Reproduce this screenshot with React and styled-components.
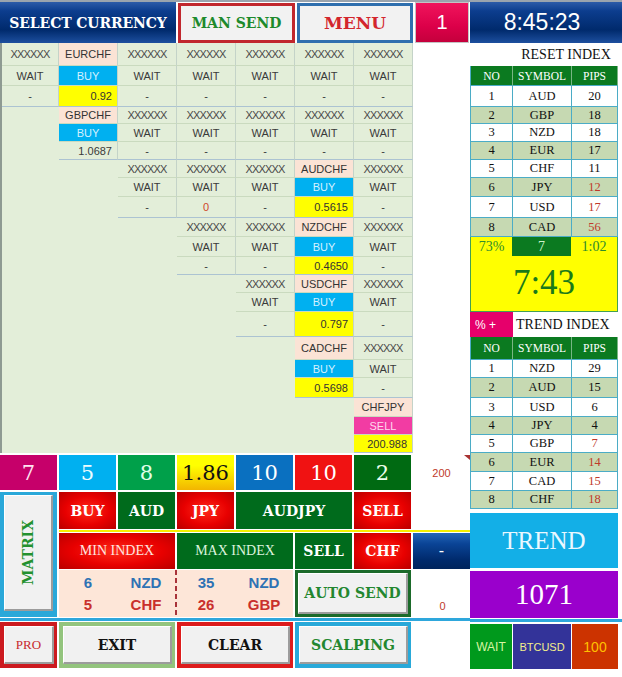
import React from "react";
import styled, { createGlobalStyle } from "styled-components";

const SANS = `"Liberation Sans", Arial, sans-serif`;
const SERIF = `"Liberation Serif", "Times New Roman", serif`;
const SLAB = `"DejaVu Serif", Georgia, serif`;

const NAVY = "linear-gradient(180deg, #2b5ba8 0%, #0c3d8e 22%, #002a6c 68%, #1d4f9f 100%)";
const RED = "radial-gradient(ellipse at center, #ff2a1a 0%, #e80000 55%, #b80000 100%)";
const GREEN = "#006b1c";

const GlobalStyle = createGlobalStyle`
	html, body { margin: 0; padding: 0; background: #fff; }
	* { box-sizing: border-box; }
`;

const ROWS = [23, 20, 21, 17, 18, 18, 18, 19, 21, 19, 20, 18, 18, 19, 25, 23, 18, 20, 19, 18, 18];

const PAIRS = {
	"0-1": { name: "EURCHF", signal: "BUY", value: "0.92", hl: true },
	"1-1": { name: "GBPCHF", signal: "BUY", value: "1.0687" },
	"2-3": { value: "0", zero: true },
	"2-5": { name: "AUDCHF", signal: "BUY", value: "0.5615", hl: true },
	"3-5": { name: "NZDCHF", signal: "BUY", value: "0.4650", hl: true },
	"4-5": { name: "USDCHF", signal: "BUY", value: "0.797", hl: true },
	"5-5": { name: "CADCHF", signal: "BUY", value: "0.5698", hl: true },
	"6-6": { name: "CHFJPY", signal: "SELL", value: "200.988", hl: true },
};

const matrixRows = [];
for (let b = 0; b < 7; b++) {
	for (let p = 0; p < 3; p++) {
		const cells = [];
		for (let c = 0; c < 7; c++) {
			if (c < b) {
				cells.push(null);
				continue;
			}
			cells.push({ name: "XXXXXX", signal: "WAIT", value: "-", ...PAIRS[`${b}-${c}`], part: p });
		}
		matrixRows.push(cells);
	}
}

const TILES = [
	{ v: "7", bg: "#c6006a", fg: "#ffe4f2" },
	{ v: "5", bg: "#00b0f0", fg: "#ecfcff" },
	{ v: "8", bg: "#00a04a", fg: "#e0ffe8" },
	{ v: "1.86", bg: "linear-gradient(180deg, #ffff00 30%, #f3b500 100%)", fg: "#111" },
	{ v: "10", bg: "#0a70c0", fg: "#ffffff" },
	{ v: "10", bg: "#f01212", fg: "#ffffff" },
	{ v: "2", bg: "#006a12", fg: "#ecffec" },
];

const RESET = [
	["1", "AUD", "20"], ["2", "GBP", "18"], ["3", "NZD", "18"], ["4", "EUR", "17"],
	["5", "CHF", "11"], ["6", "JPY", "12", true], ["7", "USD", "17", true], ["8", "CAD", "56", true],
];
const RESET_H = [21, 17, 18, 18, 18, 19, 21, 19];

const TRENDS = [
	["1", "NZD", "29"], ["2", "AUD", "15"], ["3", "USD", "6"], ["4", "JPY", "4"],
	["5", "GBP", "7", true], ["6", "EUR", "14", true], ["7", "CAD", "15", true], ["8", "CHF", "18", true],
];
const TREND_H = [18, 20, 19, 18, 18, 19, 19, 18];

const Page = styled.div`
	width: 622px;
	height: 677px;
	display: flex;
	border-top: 2px solid #9aa4ae;
	background: #fff;
	overflow: hidden;
`;

const LeftCol = styled.div`
	width: 470px;
	display: flex;
	flex-direction: column;
`;

const RightCol = styled.div`
	width: 152px;
	display: flex;
	flex-direction: column;
`;

const TopBar = styled.div`
	height: 41px;
	display: grid;
	grid-template-columns: 176px 117px 116px 54px;
	column-gap: 2px;
`;

const TitleBar = styled.div`
	background: ${NAVY};
	color: #fff;
	font-family: ${SLAB};
	font-weight: 700;
	font-size: 14px;
	letter-spacing: -0.1px;
	display: flex;
	align-items: center;
	justify-content: center;
`;

const HeadButton = styled.div`
	margin-top: 1px;
	border: 3px solid ${p => p.$frame};
	background: #f2f2f2;
	color: ${p => p.$fg};
	font-family: ${SLAB};
	font-weight: 700;
	font-size: ${p => p.$size || 14}px;
	display: flex;
	align-items: center;
	justify-content: center;
`;

const PageBadge = styled.div`
	border: 1px solid #c4c4c4;
	background: linear-gradient(180deg, #f0145c 0%, #dc0049 60%, #c4003c 100%);
	color: #fff;
	font-family: ${SANS};
	font-size: 20px;
	display: flex;
	align-items: center;
	justify-content: center;
`;

const Matrix = styled.div`
	display: grid;
	grid-template-columns: 57px repeat(6, 59px) 57px;
	grid-template-rows: ${ROWS.map(h => h + "px").join(" ")};
	background: #e3eed9;
	border-left: 2px solid #8e9a92;
`;

const KIND = {
	plain: { bg: "transparent", fg: "#3a3a3a" },
	pair: { bg: "#fbe3d5", fg: "#333" },
	buy: { bg: "#00b0f0", fg: "#d4f1ff" },
	sell: { bg: "#f23ca3", fg: "#ffd8ee" },
	hl: { bg: "#ffff00", fg: "#333" },
};

const Cell = styled.div`
	display: flex;
	align-items: center;
	justify-content: ${p => (p.$right ? "flex-end" : "center")};
	padding: 0 5px;
	font-family: ${SANS};
	font-size: 11px;
	letter-spacing: ${p => (p.$masked ? "-0.8px" : "0")};
	color: ${p => (p.$zero ? "#d0452a" : p.$masked ? "#4a4a4a" : KIND[p.$kind].fg)};
	background: ${p => KIND[p.$kind].bg};
	border-right: 1px solid #c4d3c8;
	border-bottom: 1px solid ${p => (p.$last ? "#acc3d2" : "#cadabf")};
`;

const Blank = styled.div``;

const WhiteCell = styled.div`
	background: #fff;
`;

const NumberRow = styled.div`
	margin-top: 2px;
	height: 35px;
	display: grid;
	grid-template-columns: repeat(8, 57px);
	column-gap: 2px;
`;

const Tile = styled.div`
	background: ${p => p.$bg};
	color: ${p => p.$fg};
	font-family: ${SLAB};
	font-size: 21px;
	display: flex;
	align-items: center;
	justify-content: center;
`;

const NoteCell = styled.div`
	position: relative;
	color: #c0392b;
	font-family: ${SANS};
	font-size: 11px;
	display: flex;
	align-items: flex-end;
	justify-content: center;
	padding-bottom: 11px;
	&::after {
		content: "";
		position: absolute;
		top: 0;
		right: 0;
		border-left: 6px solid transparent;
		border-top: 5px solid #a83232;
	}
`;

const Controls = styled.div`
	margin-top: 2px;
	display: grid;
	grid-template-columns: repeat(8, 57px);
	grid-template-rows: 37px 2px 36px 47px;
	column-gap: 2px;
	row-gap: 1px;
`;

const Framed = styled.div`
	grid-column: span ${p => p.$span || 1};
	grid-row: span ${p => p.$rows || 1};
	background: ${p => p.$frame};
	padding: ${p => p.$pad || "4px 3px 4px 4px"};
	display: flex;
`;

const Bevel = styled.div`
	flex: 1;
	display: flex;
	align-items: center;
	justify-content: center;
	background: #f1f1f1;
	border-top: 1px solid #fff;
	border-left: 1px solid #fff;
	border-right: 2px solid #9c9c9c;
	border-bottom: 2px solid #9c9c9c;
	color: ${p => p.$fg};
	font-family: ${p => (p.$plain ? SERIF : SLAB)};
	font-weight: ${p => (p.$plain ? 400 : 700)};
	font-size: ${p => p.$size || 14}px;
`;

const VerticalLabel = styled.span`
	writing-mode: vertical-rl;
	transform: rotate(180deg);
`;

const Btn = styled.div`
	grid-column: span ${p => p.$span || 1};
	background: ${p => (p.$tone === "red" ? RED : GREEN)};
	color: ${p => p.$fg || "#fff"};
	font-family: ${p => (p.$light ? SERIF : SLAB)};
	font-weight: ${p => (p.$light ? 400 : 700)};
	font-size: 14px;
	display: flex;
	align-items: center;
	justify-content: center;
`;

const Spacer = styled.div``;

const YellowRule = styled.div`
	grid-column: span 7;
	background: #f6f000;
`;

const DashBtn = styled.div`
	background: linear-gradient(180deg, #2466b8 0%, #0a4496 30%, #002a6c 75%, #00245c 100%);
	color: #fff;
	font-family: ${SANS};
	font-size: 16px;
	display: flex;
	align-items: center;
	justify-content: center;
`;

const IndexPanel = styled.div`
	grid-column: span 4;
	background: #fde6d8;
	display: flex;
`;

const IndexHalf = styled.div`
	flex: 1;
	display: grid;
	grid-template-columns: 1fr 1fr;
	grid-template-rows: 1fr 1fr;
	padding: 1px 0 2px;
`;

const DashDivider = styled.div`
	width: 2px;
	background: repeating-linear-gradient(180deg, #a8333a 0 5px, transparent 5px 8px);
`;

const IndexText = styled.div`
	display: flex;
	align-items: center;
	justify-content: center;
	font-family: ${SANS};
	font-weight: 700;
	font-size: 15px;
	color: ${p => (p.$red ? "#c9302c" : "#2e72b4")};
`;

const ZeroCell = styled.div`
	color: #c0392b;
	font-family: ${SANS};
	font-size: 11px;
	display: flex;
	align-items: flex-end;
	justify-content: center;
	padding: 0 0 5px 2px;
`;

const Rule = styled.div`
	margin-top: 1px;
	height: 3px;
	background: #2ea7dc;
`;

const BottomRow = styled.div`
	margin-top: 1px;
	height: 46px;
	display: grid;
	grid-template-columns: repeat(8, 57px);
	column-gap: 2px;
`;

const Clock = styled.div`
	height: 41px;
	background: ${NAVY};
	color: #fff;
	font-family: ${SANS};
	font-size: 23px;
	display: flex;
	align-items: center;
	justify-content: center;
	padding-right: 8px;
`;

const TableTitle = styled.div`
	height: ${p => p.$h}px;
	display: flex;
	align-items: center;
	justify-content: center;
	padding-left: 40px;
	font-family: ${SERIF};
	font-size: 14px;
	color: #111;
`;

const Table = styled.div`
	width: 148px;
	border-left: 1px solid #4bacc6;
`;

const TRow = styled.div`
	height: ${p => p.$h}px;
	display: grid;
	grid-template-columns: 42px 59px 46px;
	background: ${p => (p.$head ? "#0b7a20" : p.$alt ? "#c6d9b2" : "#fff")};
`;

const TCell = styled.div`
	display: flex;
	align-items: center;
	justify-content: center;
	font-family: ${SERIF};
	font-size: ${p => (p.$head ? 11.5 : 12.5)}px;
	color: ${p => (p.$head ? "#fff" : p.$red ? "#c0392b" : "#111")};
	border-right: 1px solid ${p => (p.$head ? "rgba(255,255,255,0.45)" : "#4bacc6")};
	border-bottom: 1px solid #4bacc6;
`;

const TimerBox = styled.div`
	width: 148px;
	height: 75px;
	background: #ffff00;
	border: 1px solid #44a050;
	border-top: none;
	display: flex;
	flex-direction: column;
`;

const TimerTop = styled.div`
	height: 19px;
	display: grid;
	grid-template-columns: 41px 59px 46px;
`;

const TimerCell = styled.div`
	display: flex;
	align-items: center;
	justify-content: center;
	font-family: ${SERIF};
	font-size: 14px;
	color: ${p => (p.$boxed ? "#cdf3cd" : "#2e8b2e")};
	background: ${p => (p.$boxed ? "#0b7a20" : "transparent")};
`;

const TimerBig = styled.div`
	flex: 1;
	display: flex;
	align-items: center;
	justify-content: center;
	font-family: ${SERIF};
	font-size: 35px;
	color: #1a7a1a;
	padding-bottom: 2px;
`;

const TrendHead = styled.div`
	height: 25px;
	display: grid;
	grid-template-columns: 43px 1fr;
`;

const PctTag = styled.div`
	background: #e6006b;
	color: #fff;
	font-family: ${SANS};
	font-size: 12px;
	display: flex;
	align-items: center;
	padding-left: 5px;
`;

const TrendTitle = styled.div`
	font-family: ${SERIF};
	font-size: 14px;
	color: #111;
	display: flex;
	align-items: center;
	padding-left: 3px;
`;

const Banner = styled.div`
	width: 148px;
	margin-top: ${p => p.$gap}px;
	height: ${p => p.$h}px;
	background: ${p => p.$bg};
	color: ${p => p.$fg};
	font-family: ${SERIF};
	font-size: ${p => p.$size}px;
	display: flex;
	align-items: center;
	justify-content: center;
`;

const StatusRow = styled.div`
	margin-top: 2px;
	height: 45px;
	width: 148px;
	display: grid;
	grid-template-columns: 42px 58px 46px;
	column-gap: 1px;
`;

const Status = styled.div`
	background: ${p => p.$bg};
	color: ${p => p.$fg};
	font-family: ${SANS};
	font-size: ${p => p.$size || 12}px;
	display: flex;
	align-items: center;
	justify-content: center;
`;

const renderMatrixCell = (cell, key, last) => {
	if (!cell) return <Blank key={key} />;
	if (cell.part === 0) {
		const masked = cell.name === "XXXXXX";
		return (
			<Cell key={key} $kind={masked ? "plain" : "pair"} $masked={masked}>
				{cell.name}
			</Cell>
		);
	}
	if (cell.part === 1) {
		const kind = cell.signal === "BUY" ? "buy" : cell.signal === "SELL" ? "sell" : "plain";
		return (
			<Cell key={key} $kind={kind}>
				{cell.signal}
			</Cell>
		);
	}
	const numeric = cell.value !== "-" && !cell.zero;
	return (
		<Cell key={key} $kind={cell.hl ? "hl" : "plain"} $right={numeric} $zero={cell.zero} $last={last}>
			{cell.value}
		</Cell>
	);
};

const IndexTable = ({ rows, heights }) => (
	<Table>
		{rows.map((r, i) => (
			<TRow key={i} $h={heights[i]} $alt={i % 2 === 1}>
				<TCell>{r[0]}</TCell>
				<TCell>{r[1]}</TCell>
				<TCell $red={r[3]}>{r[2]}</TCell>
			</TRow>
		))}
	</Table>
);

const TableHead = ({ h }) => (
	<Table>
		<TRow $head $h={h}>
			<TCell $head>NO</TCell>
			<TCell $head>SYMBOL</TCell>
			<TCell $head>PIPS</TCell>
		</TRow>
	</Table>
);

const App = () => {
	return (
		<>
			<GlobalStyle />
			<Page>
				<LeftCol>
					<TopBar>
						<TitleBar>SELECT CURRENCY</TitleBar>
						<HeadButton $frame="#c1272d" $fg="#1d8a2c">MAN SEND</HeadButton>
						<HeadButton $frame="#2f6fae" $fg="#d3262d" $size={17}>MENU</HeadButton>
						<PageBadge>1</PageBadge>
					</TopBar>

					<Matrix>
						{matrixRows.map((cells, r) => (
							<React.Fragment key={r}>
								{cells.map((cell, c) => renderMatrixCell(cell, `${r}-${c}`, r % 3 === 2))}
								<WhiteCell />
							</React.Fragment>
						))}
					</Matrix>

					<NumberRow>
						{TILES.map((t, i) => (
							<Tile key={i} $bg={t.bg} $fg={t.fg}>
								{t.v}
							</Tile>
						))}
						<NoteCell>200</NoteCell>
					</NumberRow>

					<Controls>
						<Framed $rows={4} $frame="#2aa8d9" $pad="3px 4px 6px 4px">
							<Bevel $fg="#24912f" $size={14}>
								<VerticalLabel>MATRIX</VerticalLabel>
							</Bevel>
						</Framed>
						<Btn $tone="red">BUY</Btn>
						<Btn>AUD</Btn>
						<Btn $tone="red">JPY</Btn>
						<Btn $span={2}>AUDJPY</Btn>
						<Btn $tone="red">SELL</Btn>
						<Spacer />

						<YellowRule />

						<Btn $tone="red" $span={2} $light $fg="#ffe6e0">MIN INDEX</Btn>
						<Btn $span={2} $light $fg="#dcf4dc">MAX INDEX</Btn>
						<Btn>SELL</Btn>
						<Btn $tone="red">CHF</Btn>
						<DashBtn>-</DashBtn>

						<IndexPanel>
							<IndexHalf>
								<IndexText>6</IndexText>
								<IndexText>NZD</IndexText>
								<IndexText $red>5</IndexText>
								<IndexText $red>CHF</IndexText>
							</IndexHalf>
							<DashDivider />
							<IndexHalf>
								<IndexText>35</IndexText>
								<IndexText>NZD</IndexText>
								<IndexText $red>26</IndexText>
								<IndexText $red>GBP</IndexText>
							</IndexHalf>
						</IndexPanel>
						<Framed $span={2} $frame="#1b6a2a" $pad="3px 3px 3px 3px">
							<Bevel $fg="#23872f" $size={14}>AUTO SEND</Bevel>
						</Framed>
						<ZeroCell>0</ZeroCell>
					</Controls>

					<Rule />

					<BottomRow>
						<Framed $frame="#cc1a1f">
							<Bevel $fg="#c8282d" $size={13} $plain>PRO</Bevel>
						</Framed>
						<Framed $span={2} $frame="#93c47d">
							<Bevel $fg="#111">EXIT</Bevel>
						</Framed>
						<Framed $span={2} $frame="#dd1c1c">
							<Bevel $fg="#111">CLEAR</Bevel>
						</Framed>
						<Framed $span={2} $frame="#29a9d9">
							<Bevel $fg="#23872f">SCALPING</Bevel>
						</Framed>
					</BottomRow>
				</LeftCol>

				<RightCol>
					<Clock>8:45:23</Clock>
					<TableTitle $h={23}>RESET INDEX</TableTitle>
					<TableHead h={20} />
					<IndexTable rows={RESET} heights={RESET_H} />

					<TimerBox>
						<TimerTop>
							<TimerCell>73%</TimerCell>
							<TimerCell $boxed>7</TimerCell>
							<TimerCell>1:02</TimerCell>
						</TimerTop>
						<TimerBig>7:43</TimerBig>
					</TimerBox>

					<TrendHead>
						<PctTag>% +</PctTag>
						<TrendTitle>TREND INDEX</TrendTitle>
					</TrendHead>
					<TableHead h={23} />
					<IndexTable rows={TRENDS} heights={TREND_H} />

					<Banner $gap={4} $h={55} $bg="#13afe7" $fg="#eaf8ff" $size={25}>
						TREND
					</Banner>
					<Banner $gap={3} $h={47} $bg="#9a00cc" $fg="#ffffff" $size={29}>
						1071
					</Banner>
					<Rule />
					<StatusRow>
						<Status $bg="#00991c" $fg="#d9f5a4">WAIT</Status>
						<Status $bg="#333399" $fg="#f3ee8c" $size={11}>BTCUSD</Status>
						<Status $bg="#cc3300" $fg="#ffc000" $size={14}>100</Status>
					</StatusRow>
				</RightCol>
			</Page>
		</>
	);
};

export default App;
